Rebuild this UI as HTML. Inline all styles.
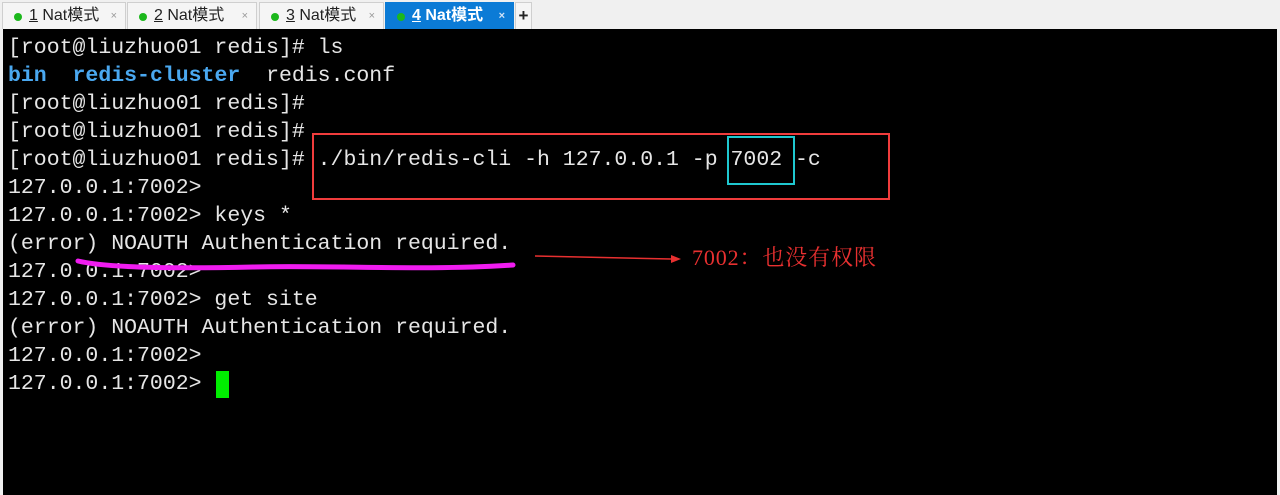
<!DOCTYPE html>
<html><head><meta charset="utf-8"><style>
body{margin:0;width:1280px;height:495px;overflow:hidden;background:#f0f0f0;font-family:"Liberation Sans","Noto Sans CJK SC",sans-serif;}
.tabs{position:absolute;top:0;left:0;width:1280px;height:29px;background:#f0f0f0;}
.tab{position:absolute;top:2px;height:27px;background:#f5f5f5;border:1px solid #cfcfcf;border-bottom:none;box-sizing:border-box;font-size:16px;color:#222;line-height:26px;}
.tab .dot{position:absolute;left:11px;top:10px;width:8px;height:8px;border-radius:50%;background:#1cb81c;}
.tab .t{position:absolute;left:26px;}
.tab .x{position:absolute;right:8px;font-size:11px;color:#999;}
.act{background:#0b7bd6;color:#fff;font-weight:bold;border-color:#0b7bd6;}
.act .x{color:#cfe3f7}
.term{position:absolute;top:29px;left:3px;width:1274px;height:466px;background:#000;}
pre{margin:0;position:absolute;left:5px;top:5px;font-family:"Liberation Mono",monospace;font-size:21.5px;line-height:28px;color:#e6e6e6;}
.b{color:#4aa8f0;font-weight:bold}
</style></head><body>
<div class="tabs">
<div class="tab" style="left:2px;width:124px"><span class="dot"></span><span class="t"><u>1</u> Nat模式</span><span class="x">×</span></div>
<div class="tab" style="left:127px;width:130px"><span class="dot"></span><span class="t"><u>2</u> Nat模式</span><span class="x">×</span></div>
<div class="tab" style="left:259px;width:125px"><span class="dot"></span><span class="t"><u>3</u> Nat模式</span><span class="x">×</span></div>
<div class="tab act" style="left:385px;width:129px"><span class="dot"></span><span class="t"><u>4</u> Nat模式</span><span class="x">×</span></div>
<div class="tab" style="left:515px;width:17px;text-align:center;font-weight:bold;font-size:17px">+</div>
</div>
<div class="term">
<pre>[root@liuzhuo01 redis]# ls
<span class="b">bin</span>  <span class="b">redis-cluster</span>  redis.conf
[root@liuzhuo01 redis]#
[root@liuzhuo01 redis]#
[root@liuzhuo01 redis]# ./bin/redis-cli -h 127.0.0.1 -p 7002 -c
127.0.0.1:7002&gt;
127.0.0.1:7002&gt; keys *
(error) NOAUTH Authentication required.
127.0.0.1:7002&gt;
127.0.0.1:7002&gt; get site
(error) NOAUTH Authentication required.
127.0.0.1:7002&gt;
127.0.0.1:7002&gt; </pre>
<div style="position:absolute;left:213px;top:342px;width:13px;height:27px;background:#00ee00"></div>
<div style="position:absolute;left:309px;top:104px;width:574px;height:63px;border:2px solid #f03c3c"></div>
<div style="position:absolute;left:724px;top:107px;width:64px;height:45px;border:2px solid #1fc8d0"></div>
<svg style="position:absolute;left:0;top:0" width="1274" height="466">
<path d="M75 232 C100 238,160 240,250 238 C330 236,420 242,510 236" stroke="#f01cf0" stroke-width="5" fill="none" stroke-linecap="round"/>
<path d="M532 227 L668 230" stroke="#e83030" stroke-width="1.5"/>
<path d="M668 226 L678 230 L668 234 Z" fill="#e83030"/>
<text x="689" y="236" font-family="Liberation Serif,'Noto Serif CJK SC',serif" font-size="22" fill="#e83030" textLength="184">7002：也没有权限</text>
</svg>
</div>
</body></html>
